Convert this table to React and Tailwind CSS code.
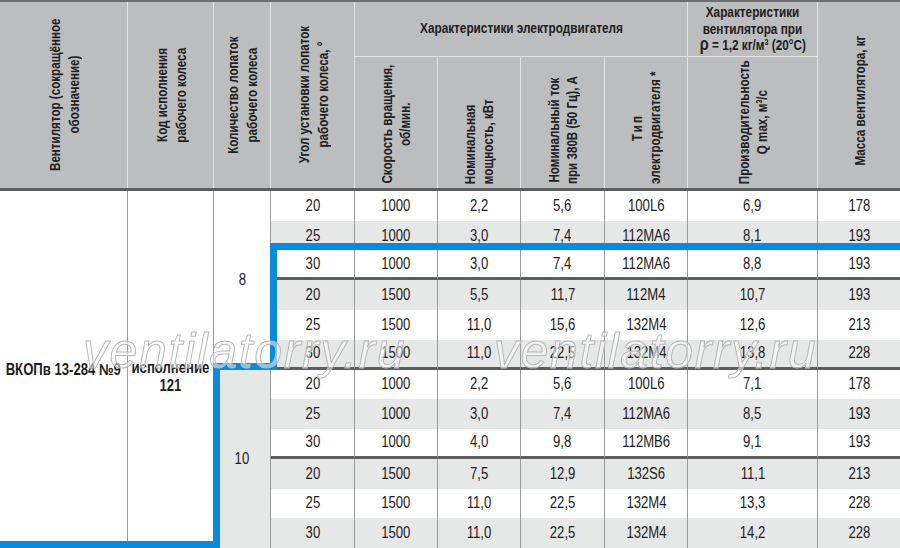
import React from "react";

const rows = [
  ["20", "1000", "2,2", "5,6", "100L6", "6,9", "178"],
  ["25", "1000", "3,0", "7,4", "112MA6", "8,1", "193"],
  ["30", "1000", "3,0", "7,4", "112MA6", "8,8", "193"],
  ["20", "1500", "5,5", "11,7", "112M4", "10,7", "193"],
  ["25", "1500", "11,0", "15,6", "132M4", "12,6", "213"],
  ["30", "1500", "11,0", "22,5", "132M4", "13,8", "228"],
  ["20", "1000", "2,2", "5,6", "100L6", "7,1", "178"],
  ["25", "1000", "3,0", "7,4", "112MA6", "8,5", "193"],
  ["30", "1000", "4,0", "9,8", "112MB6", "9,1", "193"],
  ["20", "1500", "7,5", "12,9", "132S6", "11,1", "213"],
  ["25", "1500", "11,0", "22,5", "132M4", "13,3", "228"],
  ["30", "1500", "11,0", "22,5", "132M4", "14,2", "228"],
];

function S({ children }) {
  return <span className="inline-block whitespace-nowrap scale-x-[0.82]">{children}</span>;
}

function SH({ children }) {
  return <span className="inline-block whitespace-nowrap scale-x-[0.76]">{children}</span>;
}

function VText({ lines, bottom, start }) {
  return (
    <div
      className={
        bottom
          ? "flex h-full flex-col items-center justify-end pb-[4px]"
          : "flex h-full flex-col items-center justify-center"
      }
    >
      <div className="[writing-mode:vertical-rl] rotate-180 whitespace-nowrap">
        <div
          className={
            bottom
              ? start
                ? "origin-top scale-y-[0.75] text-left leading-[18px]"
                : "origin-top scale-y-[0.75] text-center leading-[18px]"
              : "scale-y-[0.75] text-center leading-[19px]"
          }
        >
          {lines.map((l, i) => (
            <div key={i}>{l}</div>
          ))}
        </div>
      </div>
    </div>
  );
}

export default function App() {
  return (
    <div className="relative h-[548px] w-[900px] overflow-hidden bg-white font-['Liberation_Sans',Arial,sans-serif] text-[#1d1d1d]">
      {/* header */}
      <div className="border-t-2 border-b-[3px] border-t-[#6e6e6e] border-b-[#5e5e5e] bg-[#bcbdbf] text-[15.5px] font-bold text-[#202020]">
        <div className="grid h-[186px] grid-cols-[128px_86px_57px_84px_83px_83px_84px_83px_130px_82px] grid-rows-[55px_131px]">
          <div className="row-span-2 border-r border-[#e4e4e4]">
            <VText lines={["Вентилятор (сокращённое", "обозначение)"]} />
          </div>
          <div className="row-span-2 border-r border-[#e4e4e4]">
            <VText lines={["Код исполнения", "рабочего колеса"]} />
          </div>
          <div className="row-span-2 border-r border-[#e4e4e4]">
            <VText lines={["Количество лопаток", "рабочего колеса"]} />
          </div>
          <div className="row-span-2 border-r border-[#e4e4e4]">
            <VText lines={["Угол установки лопаток", "рабочего колеса, °"]} />
          </div>
          <div className="col-span-4 flex items-center justify-center border-r border-b border-[#e4e4e4] pb-[2px]">
            <SH>Характеристики электродвигателя</SH>
          </div>
          <div className="flex flex-col items-center justify-center border-r border-b border-[#e4e4e4] text-center leading-[16.5px]">
            <SH>Характеристики</SH>
            <SH>вентилятора при</SH>
            <SH>
              <span className="text-[19px] leading-[14px]">ρ</span> = 1,2 кг/м³ (20°C)
            </SH>
          </div>
          <div className="row-span-2 pt-[12px]">
            <VText lines={["Масса вентилятора, кг"]} />
          </div>
          <div className="border-r border-[#e4e4e4]">
            <VText bottom lines={["Скорость вращения,", "об/мин."]} />
          </div>
          <div className="border-r border-[#e4e4e4]">
            <VText bottom start lines={["Номинальная", "мощность, кВт"]} />
          </div>
          <div className="border-r border-[#e4e4e4]">
            <VText bottom lines={["Номинальный ток", "при 380В (50 Гц), А"]} />
          </div>
          <div className="border-r border-[#e4e4e4]">
            <VText
              bottom
              lines={[<span className="tracking-[3px]">Тип</span>, "электродвигателя *"]}
            />
          </div>
          <div className="border-r border-[#e4e4e4]">
            <VText bottom lines={["Производительность", "Q max, м³/с"]} />
          </div>
        </div>
      </div>

      {/* body */}
      <div className="grid grid-cols-[128px_86px_57px_84px_83px_83px_84px_83px_130px_82px] grid-rows-[repeat(12,29.75px)] border-b border-[#8e8e8e] text-[16px]">
        <div className="col-start-1 row-span-12 row-start-1 flex items-center justify-center overflow-visible border-r border-[#9a9a9a] font-bold">
          <S>ВКОПв 13-284 №9</S>
        </div>
        <div className="col-start-2 row-span-12 row-start-1 flex flex-col items-center justify-center border-r border-[#9a9a9a] pt-[15px] leading-[18px] font-bold">
          <S>исполнение</S>
          <S>121</S>
        </div>
        <div className="col-start-3 row-span-6 row-start-1 flex items-center justify-center border-r border-[#9a9a9a]">
          <S>8</S>
        </div>
        <div className="col-start-3 row-span-6 row-start-7 flex items-center justify-center border-r border-[#9a9a9a] bg-[#e6e7e7]">
          <S>10</S>
        </div>
        {rows.map((r, i) =>
          r.map((v, j) => (
            <div
              key={`${i}-${j}`}
              style={{ gridRow: i + 1, gridColumn: j + 4 }}
              className={[
                "flex items-center justify-center",
                j < 6 ? "border-r border-r-[#9a9a9a]" : "",
                i % 2 === 1 ? "bg-[#e6e7e7]" : "bg-white",
                i === 2 || i === 5 || i === 8 ? "border-b-[3px] border-b-[#5e5e5e]" : "",
              ].join(" ")}
            >
              <S>{v}</S>
            </div>
          ))
        )}
      </div>

      {/* highlight outline */}
      <div className="absolute top-[243px] left-[270px] h-[7px] w-[630px] bg-[#0a8ad9]" />
      <div className="absolute top-[243px] left-[270px] h-[127px] w-[7px] bg-[#0a8ad9]" />
      <div className="absolute top-[363px] left-[213px] h-[7px] w-[64px] bg-[#0a8ad9]" />
      <div className="absolute top-[363px] left-[213px] h-[185px] w-[7px] bg-[#0a8ad9]" />
      <div className="absolute top-[541px] left-0 h-[7px] w-[220px] bg-[#0a8ad9]" />

      {/* watermark */}
      <div className="pointer-events-none absolute top-[326px] left-[83px] text-[50px] leading-none tracking-[1.6px] text-white/50 italic [-webkit-text-stroke:1px_#b8b8b8]">
        ventilatorry.ru
      </div>
      <div className="pointer-events-none absolute top-[326px] left-[494px] text-[50px] leading-none tracking-[1.6px] text-white/50 italic [-webkit-text-stroke:1px_#b8b8b8]">
        ventilatorry.ru
      </div>
    </div>
  );
}
